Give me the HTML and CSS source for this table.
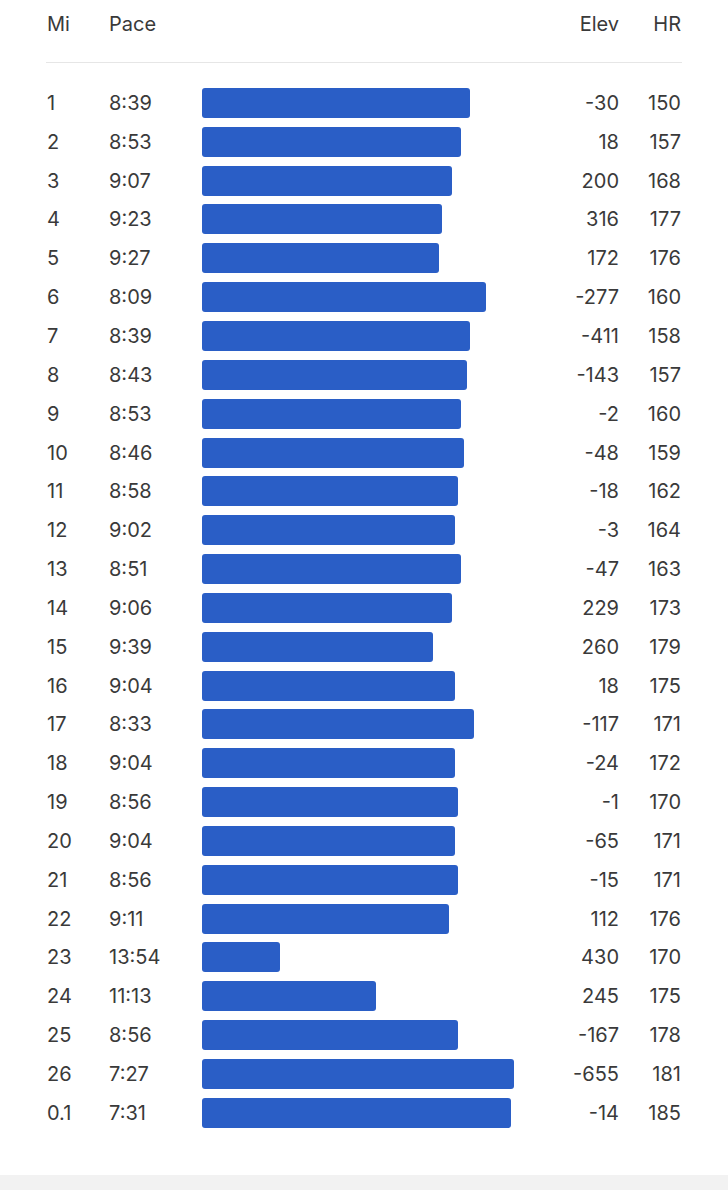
FILE: index.html
```html
<!DOCTYPE html>
<html lang="en">
<head>
<meta charset="utf-8">
<title>Splits</title>
<link rel="stylesheet" href="styles.css">
</head>
<body>
<div class="page">
  <div class="splits">
    <div class="row head">
      <div class="mi">Mi</div>
      <div class="pace">Pace</div>
      <div class="barcell"></div>
      <div class="elev">Elev</div>
      <div class="hr">HR</div>
    </div>
    <div class="rows">
      <div class="row"><div class="mi">1</div><div class="pace">8:39</div><div class="barcell"><div class="bar" style="width:268px"></div></div><div class="elev">-30</div><div class="hr">150</div></div>
      <div class="row"><div class="mi">2</div><div class="pace">8:53</div><div class="barcell"><div class="bar" style="width:259px"></div></div><div class="elev">18</div><div class="hr">157</div></div>
      <div class="row"><div class="mi">3</div><div class="pace">9:07</div><div class="barcell"><div class="bar" style="width:250px"></div></div><div class="elev">200</div><div class="hr">168</div></div>
      <div class="row"><div class="mi">4</div><div class="pace">9:23</div><div class="barcell"><div class="bar" style="width:240px"></div></div><div class="elev">316</div><div class="hr">177</div></div>
      <div class="row"><div class="mi">5</div><div class="pace">9:27</div><div class="barcell"><div class="bar" style="width:237px"></div></div><div class="elev">172</div><div class="hr">176</div></div>
      <div class="row"><div class="mi">6</div><div class="pace">8:09</div><div class="barcell"><div class="bar" style="width:284px"></div></div><div class="elev">-277</div><div class="hr">160</div></div>
      <div class="row"><div class="mi">7</div><div class="pace">8:39</div><div class="barcell"><div class="bar" style="width:268px"></div></div><div class="elev">-411</div><div class="hr">158</div></div>
      <div class="row"><div class="mi">8</div><div class="pace">8:43</div><div class="barcell"><div class="bar" style="width:265px"></div></div><div class="elev">-143</div><div class="hr">157</div></div>
      <div class="row"><div class="mi">9</div><div class="pace">8:53</div><div class="barcell"><div class="bar" style="width:259px"></div></div><div class="elev">-2</div><div class="hr">160</div></div>
      <div class="row"><div class="mi">10</div><div class="pace">8:46</div><div class="barcell"><div class="bar" style="width:262px"></div></div><div class="elev">-48</div><div class="hr">159</div></div>
      <div class="row"><div class="mi">11</div><div class="pace">8:58</div><div class="barcell"><div class="bar" style="width:256px"></div></div><div class="elev">-18</div><div class="hr">162</div></div>
      <div class="row"><div class="mi">12</div><div class="pace">9:02</div><div class="barcell"><div class="bar" style="width:253px"></div></div><div class="elev">-3</div><div class="hr">164</div></div>
      <div class="row"><div class="mi">13</div><div class="pace">8:51</div><div class="barcell"><div class="bar" style="width:259px"></div></div><div class="elev">-47</div><div class="hr">163</div></div>
      <div class="row"><div class="mi">14</div><div class="pace">9:06</div><div class="barcell"><div class="bar" style="width:250px"></div></div><div class="elev">229</div><div class="hr">173</div></div>
      <div class="row"><div class="mi">15</div><div class="pace">9:39</div><div class="barcell"><div class="bar" style="width:231px"></div></div><div class="elev">260</div><div class="hr">179</div></div>
      <div class="row"><div class="mi">16</div><div class="pace">9:04</div><div class="barcell"><div class="bar" style="width:253px"></div></div><div class="elev">18</div><div class="hr">175</div></div>
      <div class="row"><div class="mi">17</div><div class="pace">8:33</div><div class="barcell"><div class="bar" style="width:272px"></div></div><div class="elev">-117</div><div class="hr">171</div></div>
      <div class="row"><div class="mi">18</div><div class="pace">9:04</div><div class="barcell"><div class="bar" style="width:253px"></div></div><div class="elev">-24</div><div class="hr">172</div></div>
      <div class="row"><div class="mi">19</div><div class="pace">8:56</div><div class="barcell"><div class="bar" style="width:256px"></div></div><div class="elev">-1</div><div class="hr">170</div></div>
      <div class="row"><div class="mi">20</div><div class="pace">9:04</div><div class="barcell"><div class="bar" style="width:253px"></div></div><div class="elev">-65</div><div class="hr">171</div></div>
      <div class="row"><div class="mi">21</div><div class="pace">8:56</div><div class="barcell"><div class="bar" style="width:256px"></div></div><div class="elev">-15</div><div class="hr">171</div></div>
      <div class="row"><div class="mi">22</div><div class="pace">9:11</div><div class="barcell"><div class="bar" style="width:247px"></div></div><div class="elev">112</div><div class="hr">176</div></div>
      <div class="row"><div class="mi">23</div><div class="pace">13:54</div><div class="barcell"><div class="bar" style="width:78px"></div></div><div class="elev">430</div><div class="hr">170</div></div>
      <div class="row"><div class="mi">24</div><div class="pace">11:13</div><div class="barcell"><div class="bar" style="width:174px"></div></div><div class="elev">245</div><div class="hr">175</div></div>
      <div class="row"><div class="mi">25</div><div class="pace">8:56</div><div class="barcell"><div class="bar" style="width:256px"></div></div><div class="elev">-167</div><div class="hr">178</div></div>
      <div class="row"><div class="mi">26</div><div class="pace">7:27</div><div class="barcell"><div class="bar" style="width:312px"></div></div><div class="elev">-655</div><div class="hr">181</div></div>
      <div class="row"><div class="mi">0.1</div><div class="pace">7:31</div><div class="barcell"><div class="bar" style="width:309px"></div></div><div class="elev">-14</div><div class="hr">185</div></div>
    </div>
  </div>
  <div class="footer-band"></div>
</div>
</body>
</html>
```

FILE: styles.css
```css
* { box-sizing: border-box; }
html, body {
  margin: 0;
  padding: 0;
  background: #ffffff;
}
body {
  font-family: Inter, "Noto Sans", "Liberation Sans", sans-serif;
  color: #3a3a3a;
  font-size: 20px;
}
.page {
  width: 728px;
  display: flex;
  flex-direction: column;
}
.splits {
  margin: 0 46px;
  height: 1175px;
}
.row {
  display: grid;
  grid-template-columns: 63px 93px 1fr 99px 63px;
  align-items: center;
  height: 38.85px;
  line-height: 24px;
}
.row.head {
  height: 63px;
  align-items: start;
  padding-top: 12px;
  border-bottom: 1px solid #e6e6e6;
}
.rows {
  padding-top: 20.5px;
}
.mi { padding-left: 1px; }
.elev, .hr { text-align: right; }
.hr { padding-right: 1px; }
.barcell {
  display: flex;
  align-items: center;
}
.bar {
  height: 30px;
  background: #2a5ec6;
  border-radius: 3px;
}
.footer-band {
  height: 15px;
  background: #f2f2f2;
}
```
